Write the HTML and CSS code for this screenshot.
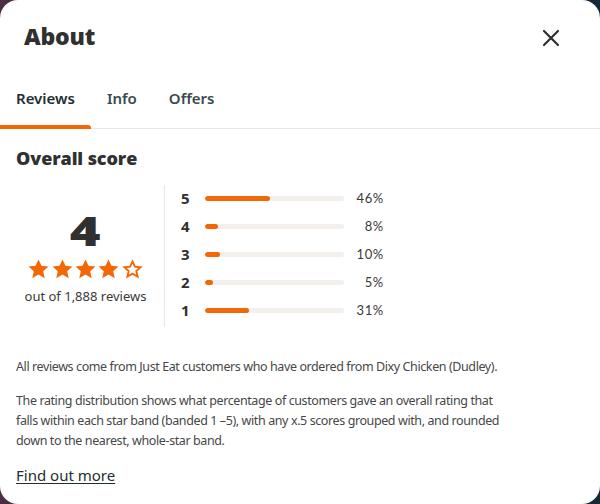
FILE: index.html
```html
<!DOCTYPE html>
<html lang="en">
<head>
<meta charset="utf-8">
<title>About</title>
<link rel="stylesheet" href="styles.css">
</head>
<body>
<div class="modal">
  <header class="modal-header">
    <h1 class="title">About</h1>
    <button class="close" aria-label="Close">
      <svg viewBox="0 0 18 18" width="18" height="18"><path d="M2 2 L16 16 M16 2 L2 16" stroke="#303030" stroke-width="2.2" stroke-linecap="round" fill="none"/></svg>
    </button>
  </header>
  <nav class="tabs">
    <span class="tab active">Reviews</span>
    <span class="tab">Info</span>
    <span class="tab">Offers</span>
  </nav>
  <section class="content">
    <h2 class="section-title">Overall score</h2>
    <div class="score">
      <div class="score-left">
        <div class="big">4</div>
        <div class="stars">
          <svg viewBox="0 0 24 24" width="23" height="23"><path class="full" d="M12 1.5l3.1 6.6 7.3.8-5.5 4.9 1.6 7.2L12 17.3l-6.5 3.7 1.6-7.2-5.5-4.9 7.3-.8z"/></svg>
          <svg viewBox="0 0 24 24" width="23" height="23"><path class="full" d="M12 1.5l3.1 6.6 7.3.8-5.5 4.9 1.6 7.2L12 17.3l-6.5 3.7 1.6-7.2-5.5-4.9 7.3-.8z"/></svg>
          <svg viewBox="0 0 24 24" width="23" height="23"><path class="full" d="M12 1.5l3.1 6.6 7.3.8-5.5 4.9 1.6 7.2L12 17.3l-6.5 3.7 1.6-7.2-5.5-4.9 7.3-.8z"/></svg>
          <svg viewBox="0 0 24 24" width="23" height="23"><path class="full" d="M12 1.5l3.1 6.6 7.3.8-5.5 4.9 1.6 7.2L12 17.3l-6.5 3.7 1.6-7.2-5.5-4.9 7.3-.8z"/></svg>
          <svg viewBox="0 0 24 24" width="23" height="23"><path class="empty" d="M12 3.6l2.5 5.4 5.9.7-4.4 3.9 1.3 5.8L12 16.4l-5.3 3 1.3-5.8-4.4-3.9 5.9-.7z"/></svg>
        </div>
        <div class="count">out of 1,888 reviews</div>
      </div>
      <div class="dist">
        <div class="row"><span class="num">5</span><span class="bar"><span class="fill" style="width:47%"></span></span><span class="pct">46%</span></div>
        <div class="row"><span class="num">4</span><span class="bar"><span class="fill" style="width:9%"></span></span><span class="pct">8%</span></div>
        <div class="row"><span class="num">3</span><span class="bar"><span class="fill" style="width:11%"></span></span><span class="pct">10%</span></div>
        <div class="row"><span class="num">2</span><span class="bar"><span class="fill" style="width:6%"></span></span><span class="pct">5%</span></div>
        <div class="row"><span class="num">1</span><span class="bar"><span class="fill" style="width:32%"></span></span><span class="pct">31%</span></div>
      </div>
    </div>
    <p class="text first">All reviews come from Just Eat customers who have ordered from Dixy Chicken (Dudley).</p>
    <p class="text">The rating distribution shows what percentage of customers gave an overall rating that falls within each star band (banded 1 –5), with any x.5 scores grouped with, and rounded down to the nearest, whole-star band.</p>
    <a class="more" href="#">Find out more</a>
  </section>
</div>
</body>
</html>
```
FILE: styles.css
```css
* { box-sizing: border-box; }
html, body { margin: 0; padding: 0; }
body {
  width: 600px;
  height: 504px;
  overflow: hidden;
  background: linear-gradient(90deg, #4b2d45 0%, #2a2d3e 60%, #14283a 100%);
  font-family: "Lato", "Noto Sans", sans-serif;
  color: #242e30;
}
.modal {
  width: 600px;
  height: 504px;
  background: #fff;
  border-radius: 18px;
  position: relative;
  overflow: hidden;
}
.modal-header {
  display: flex;
  justify-content: space-between;
  align-items: flex-start;
  padding: 20px 40px 0 24px;
  height: 72px;
}
.title {
  margin: 0;
  font-family: "Open Sans", "Noto Sans", sans-serif;
  font-weight: 800;
  font-size: 23px;
  line-height: 32px;
  color: #303030;
  letter-spacing: -0.2px;
}
.close {
  border: 0;
  background: none;
  padding: 0;
  margin-top: 9px;
  width: 18px;
  height: 18px;
  cursor: pointer;
}
.close svg { display: block; }
.tabs {
  display: flex;
  border-bottom: 1px solid #e6e6e6;
  height: 57px;
  align-items: flex-start;
}
.tab {
  font-family: "Noto Sans", sans-serif;
  font-size: 15px;
  font-weight: 600;
  color: #3b4a4c;
  padding: 16px 16px 0;
  height: 56px;
  position: relative;
}
.tab.active { color: #242e30; }
.tab.active::after {
  content: "";
  position: absolute;
  left: 0;
  right: 0;
  bottom: -1px;
  height: 4px;
  background: #f36805;
  border-radius: 0 3px 0 0;
}
.content { padding: 0 16px; }
.section-title {
  margin: 17px 0 0;
  font-family: "Open Sans", "Noto Sans", sans-serif;
  font-weight: 800;
  font-size: 18px;
  color: #303030;
  line-height: 24px;
  letter-spacing: -0.1px;
}
.score {
  display: flex;
  margin-top: 15px;
}
.score-left {
  width: 149px;
  padding-right: 9px;
  border-right: 1px solid #e6e6e6;
  display: flex;
  flex-direction: column;
  align-items: center;
  height: 142px;
  padding-top: 24px;
}
.big {
  font-family: "Open Sans", "Noto Sans", sans-serif;
  font-weight: 800;
  font-size: 41px;
  line-height: 42px;
  color: #303030;
  transform: scaleX(1.28);
}
.stars {
  display: flex;
  margin-top: 7px;
}
.stars svg { display: block; margin: 0 0.2px; }
.stars .full { fill: #f36805; }
.stars .empty { fill: none; stroke: #f36805; stroke-width: 2; stroke-linejoin: miter; }
.count {
  font-family: "Noto Sans", sans-serif;
  font-size: 13px;
  color: #3a3a3a;
  margin-top: 6px;
}
.dist {
  display: flex;
  flex-direction: column;
  padding-left: 16px;
  margin-top: -1px;
}
.row {
  display: flex;
  align-items: center;
  height: 28px;
}
.num {
  width: 24px;
  font-family: "Noto Sans", sans-serif;
  font-weight: 700;
  font-size: 15px;
  color: #303030;
}
.bar {
  width: 139px;
  height: 5px;
  border-radius: 3px;
  background: #f3efea;
  overflow: hidden;
  display: block;
}
.fill {
  display: block;
  height: 100%;
  background: #f36805;
  border-radius: 3px;
}
.pct {
  width: 40px;
  text-align: right;
  font-family: "Lato", "Noto Sans", sans-serif;
  font-size: 13px;
  letter-spacing: 0.7px;
  color: #3a3a3a;
}
.text {
  margin: 0;
  width: 488px;
  font-family: "Noto Sans", sans-serif;
  font-size: 12.5px;
  letter-spacing: -0.4px;
  line-height: 20px;
  color: #474747;
}
.text.first { margin-top: 30px; margin-bottom: 14px; }
.more {
  display: inline-block;
  margin-top: 14px;
  font-family: "Noto Sans", sans-serif;
  font-size: 15px;
  color: #242e30;
  text-decoration: underline;
  text-underline-offset: 2px;
}
```
